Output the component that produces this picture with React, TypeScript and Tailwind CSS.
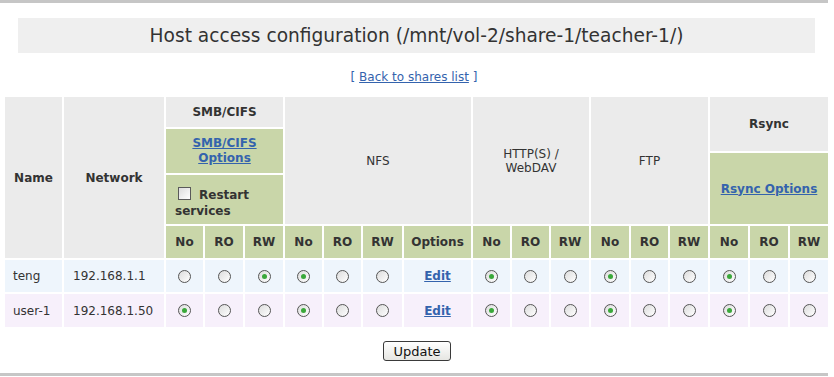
import React from "react";

const GRAY = "bg-[#ebebeb]";
const GREEN = "bg-[#c9d6a9]";

const Radio: React.FC<{ checked?: boolean }> = ({ checked }) => (
  <div className="w-[13px] h-[13px] rounded-full border border-[#555] bg-gradient-to-br from-[#dcdcdc] to-white flex items-center justify-center">
    {checked && <div className="w-[5px] h-[5px] rounded-full bg-[#3aa83a]" />}
  </div>
);

const Link: React.FC<{ children: React.ReactNode; bold?: boolean }> = ({
  children,
  bold = true,
}) => (
  <a
    href="#"
    className={`text-[#3463ad] underline ${bold ? "font-bold" : "font-normal"}`}
  >
    {children}
  </a>
);

type Row = {
  name: string;
  network: string;
  values: number[]; // checked radio per group: smb, nfs, http, ftp, rsync
  bg: string;
};

const rows: Row[] = [
  { name: "teng", network: "192.168.1.1", values: [2, 0, 0, 0, 0], bg: "bg-[#eef5fc]" },
  { name: "user-1", network: "192.168.1.50", values: [0, 0, 0, 0, 0], bg: "bg-[#f7f0fb]" },
];

const subLabels = ["No", "RO", "RW", "No", "RO", "RW", "Options", "No", "RO", "RW", "No", "RO", "RW", "No", "RO", "RW"];

const HostAccessPage: React.FC = () => {
  const headCell = `${GRAY} flex items-center justify-center text-center font-bold`;
  const subCell = `${GREEN} flex items-center justify-center font-bold`;

  return (
    <div className="w-[828px] min-h-[377px] bg-white text-[#333] text-[12px] font-['DejaVu_Sans',sans-serif]">
      <div className="h-[3px] bg-[#c6c6c6]" />

      <div className="ml-[18px] mr-[13px] mt-[15px] h-[35px] bg-[#efefef] flex items-center justify-center text-[18.6px] text-[#333]">
        Host access configuration (/mnt/vol-2/share-1/teacher-1/)
      </div>

      <div className="mt-[15px] text-center text-[12px] text-[#3463ad]">
        [ <Link bold={false}>Back to shares list</Link> ]
      </div>

      <div className="ml-[5px] mt-[11px] grid grid-cols-[57px_100px_37px_38px_38px_37px_37px_39px_67px_37px_37px_38px_38px_37px_38px_38px_38px_38px] grid-rows-[30px_44px_49px_32px_32px_33px] gap-[2px]">
        <div className={`${headCell} row-span-4`}>Name</div>
        <div className={`${headCell} row-span-4`}>Network</div>
        <div className={`${headCell} col-span-3`}>SMB/CIFS</div>
        <div className={`${headCell} col-span-4 row-span-3 font-normal`}>NFS</div>
        <div className={`${headCell} col-span-3 row-span-3 font-normal leading-[14px]`}>
          HTTP(S) /<br />WebDAV
        </div>
        <div className={`${headCell} col-span-3 row-span-3 font-normal`}>FTP</div>
        <div className="col-span-3 row-span-3 flex flex-col gap-[2px]">
          <div className={`${headCell} h-[54px]`}>Rsync</div>
          <div className={`${GREEN} grow flex items-center justify-center`}>
            <Link>Rsync Options</Link>
          </div>
        </div>

        <div className={`${GREEN} col-start-3 col-span-3 flex items-center justify-center text-center leading-[15px]`}>
          <Link>
            SMB/CIFS
            <br />
            Options
          </Link>
        </div>

        <div className={`${GREEN} col-start-3 col-span-3 font-bold px-[9px] pt-[12px] leading-[16px]`}>
          <span className="inline-block w-[13px] h-[13px] ml-[3px] mr-[8px] border border-[#5a5a5a] bg-gradient-to-br from-[#dcdcdc] to-white align-[-1px]" />
          Restart services
        </div>

        {subLabels.map((label, i) => (
          <div key={i} className={subCell}>
            {label}
          </div>
        ))}

        {rows.map((row) => {
          const cells: React.ReactNode[] = [];
          row.values.forEach((checked, gi) => {
            for (let k = 0; k < 3; k++) {
              cells.push(
                <div key={`${gi}-${k}`} className={`${row.bg} flex items-center justify-center`}>
                  <Radio checked={checked === k} />
                </div>
              );
            }
            if (gi === 1) {
              cells.push(
                <div key={`${gi}-edit`} className={`${row.bg} flex items-center justify-center`}>
                  <Link>Edit</Link>
                </div>
              );
            }
          });
          return (
            <React.Fragment key={row.name}>
              <div className={`${row.bg} flex items-center pl-[8px]`}>{row.name}</div>
              <div className={`${row.bg} flex items-center pl-[9px]`}>{row.network}</div>
              {cells}
            </React.Fragment>
          );
        })}
      </div>

      <div className="mt-[14px] flex justify-center pl-[6px]">
        <button className="w-[68px] h-[20px] border border-[#3a3a3a] rounded-[3px] bg-gradient-to-b from-white to-[#e6e6e2] text-[13px] font-normal text-[#111] leading-none">
          Update
        </button>
      </div>

      <div className="mt-[12px] h-[3px] bg-[#c6c6c6]" />
    </div>
  );
};

export default HostAccessPage;
